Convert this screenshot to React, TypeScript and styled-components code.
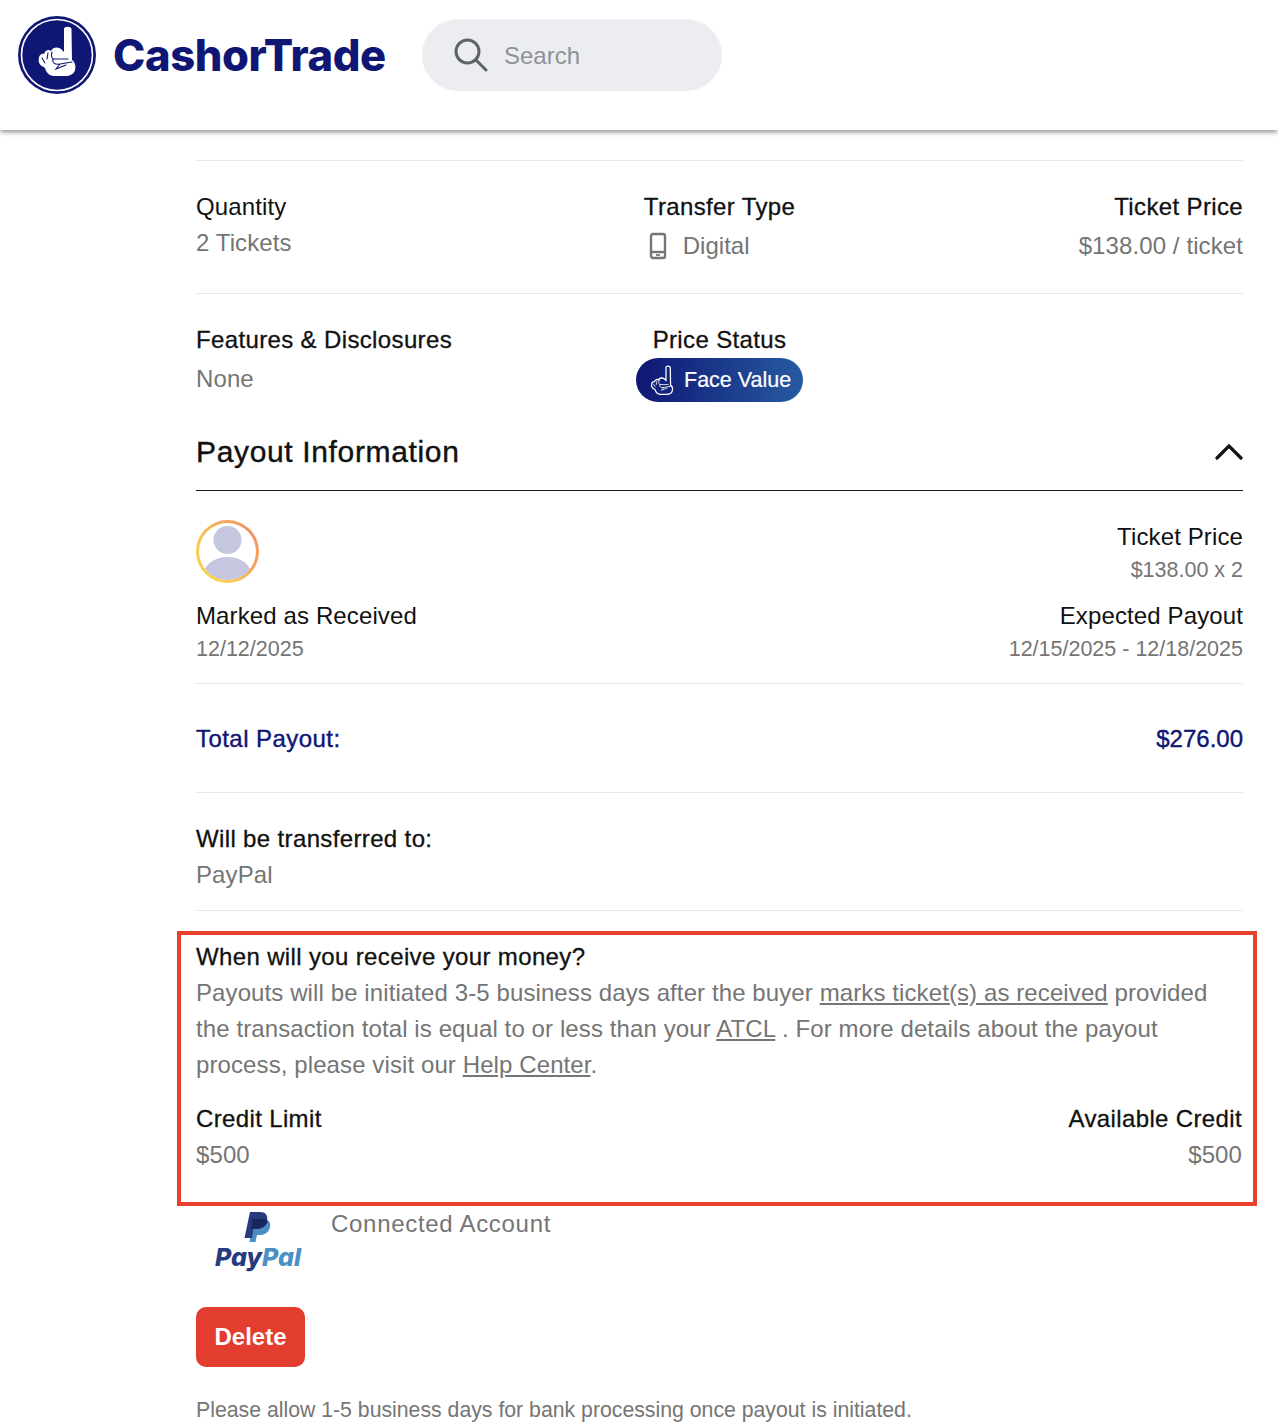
import React from 'react';
import styled, { createGlobalStyle } from 'styled-components';

const GlobalStyle = createGlobalStyle`
  html, body {
    margin: 0;
    padding: 0;
    background: #fff;
    font-family: "Liberation Sans", Arial, sans-serif;
    -webkit-font-smoothing: antialiased;
  }
  * { box-sizing: border-box; }
`;

const Navy = '#0f1674';
const Gray = '#757575';
const Ink = '#111111';
const Line = '#e8e8e8';

const Page = styled.div`
  width: 1278px;
  height: 1426px;
  overflow: hidden;
`;

const Header = styled.header`
  height: 130px;
  display: flex;
  align-items: flex-start;
  padding: 16px 0 0 18px;
  background: #fff;
  box-shadow: 0 2px 5px rgba(0, 0, 0, 0.45);
  position: relative;
`;

const Brand = styled.div`
  font-family: Inter, sans-serif;
  font-weight: 800;
  font-size: 43.5px;
  letter-spacing: -0.4px;
  line-height: 78px;
  color: ${Navy};
  margin-left: 17px;
  width: 273px;
  white-space: nowrap;
`;

const SearchBox = styled.div`
  width: 300px;
  height: 72px;
  margin: 3px 0 0 36px;
  border-radius: 36px;
  background: #ebedf0;
  display: flex;
  align-items: center;
  padding-left: 30px;
  gap: 16px;
  color: #8e9399;
  font-size: 24px;
`;

const SearchText = styled.span`
  padding-top: 2px;
`;

const Main = styled.main`
  margin-left: 196px;
  width: 1047px;
  padding-top: 30px;
`;

const Row = styled.section<{ $height: number }>`
  height: ${(p) => p.$height}px;
  display: grid;
  grid-template-columns: 1fr 1fr 1fr;
  border-top: 1px solid ${Line};
`;

const Col = styled.div<{ $align?: string; $top?: number }>`
  display: flex;
  flex-direction: column;
  align-items: ${(p) => p.$align || 'flex-start'};
  padding-top: ${(p) => p.$top ?? 31}px;
`;

const Group = styled.div`
  display: flex;
  flex-direction: column;
  align-items: flex-start;
`;

const Label = styled.div`
  font-size: 24px;
  line-height: 30px;
  color: ${Ink};
  white-space: nowrap;
  letter-spacing: 0.36px;
  -webkit-text-stroke: 0.3px ${Ink};
`;

const Plain = styled(Label)`
  letter-spacing: 0.12px;
  -webkit-text-stroke: 0;
`;

const Value = styled.div<{ $top?: number; $small?: boolean }>`
  font-size: ${(p) => (p.$small ? 21.5 : 24)}px;
  line-height: 30px;
  color: ${Gray};
  letter-spacing: ${(p) => (p.$small ? 0 : 0.1)}px;
  margin-top: ${(p) => p.$top ?? 6}px;
  white-space: nowrap;
`;

const DigitalRow = styled.div`
  display: flex;
  align-items: center;
  gap: 16px;
  margin: 9px 0 0 5px;
  font-size: 24px;
  line-height: 30px;
  color: ${Gray};
`;

const Badge = styled.div`
  width: 167px;
  height: 44px;
  margin-top: 3px;
  border-radius: 22px;
  background: linear-gradient(90deg, #0f1674, #265ba0);
  color: #fff;
  display: flex;
  align-items: center;
  gap: 10px;
  padding-left: 14px;
  font-size: 21.5px;
  -webkit-text-stroke: 0.2px #fff;
  white-space: nowrap;
`;

const SectionHead = styled.div`
  height: 89px;
  display: flex;
  align-items: center;
  justify-content: space-between;
  border-bottom: 1px solid #1a1a1a;
  font-size: 30px;
  letter-spacing: 0.65px;
  -webkit-text-stroke: 0.4px ${Ink};
  color: ${Ink};
  padding-top: 12px;
`;

const PayoutGrid = styled.div`
  height: 192px;
  display: flex;
  justify-content: space-between;
`;

const Received = styled.div`
  padding-top: 29px;
`;

const ReceivedLabel = styled(Plain)`
  margin-top: 18px;
`;

const ExpectedLabel = styled(Plain)`
  margin-top: 16px;
`;

const Avatar = styled.div`
  width: 63px;
  height: 63px;
  border-radius: 50%;
  background: conic-gradient(from 45deg, #f08f6a, #f6a35e, #f8d24a, #f8cf4b, #f5b558, #f08f6a);
  padding: 3px;
`;

const AvatarInner = styled.div`
  width: 100%;
  height: 100%;
  border-radius: 50%;
  background: #fff;
  overflow: hidden;
`;

const TotalRow = styled.div`
  height: 109px;
  border-top: 1px solid ${Line};
  display: flex;
  align-items: center;
  justify-content: space-between;
  font-size: 24px;
  -webkit-text-stroke: 0.4px ${Navy};
  color: ${Navy};
  padding-top: 2px;
`;

const TotalLabel = styled.span`
  letter-spacing: 0.45px;
`;

const TransferRow = styled.div`
  height: 118px;
  border-top: 1px solid ${Line};
  padding-top: 31px;
`;

const Rule = styled.div`
  height: 1px;
  background: ${Line};
`;

const Callout = styled.div`
  width: 1080px;
  height: 275px;
  margin: 20px 0 0 -19px;
  border: 4px solid #e8402a;
  padding: 7px 11px 0 15px;
`;

const CalloutText = styled.p`
  margin: 3px 0 0;
  font-size: 24px;
  line-height: 36px;
  letter-spacing: 0.1px;
  color: ${Gray};
  white-space: nowrap;
`;

const TextLink = styled.a`
  color: ${Gray};
  text-decoration: underline;
`;

const CreditRow = styled.div`
  display: flex;
  justify-content: space-between;
  margin-top: 21px;
`;

const CreditCol = styled.div<{ $right?: boolean }>`
  display: flex;
  flex-direction: column;
  align-items: ${(p) => (p.$right ? 'flex-end' : 'flex-start')};
`;

const AccountRow = styled.div`
  display: flex;
  height: 101px;
  padding-left: 17px;
  gap: 28px;
`;

const PayPalLogo = styled.div`
  width: 90px;
  padding-top: 5px;
  display: flex;
  flex-direction: column;
  align-items: center;
`;

const PayPalWord = styled.div`
  font-family: Inter, sans-serif;
  font-weight: 800;
  font-style: italic;
  font-size: 25px;
  line-height: 30px;
  color: #253b80;
  margin-top: -1px;
  white-space: nowrap;
`;

const PayPalPal = styled.span`
  color: #4a90c4;
`;

const ConnectedText = styled.div`
  font-size: 24px;
  line-height: 30px;
  letter-spacing: 0.7px;
  color: ${Gray};
  padding-top: 3px;
`;

const DeleteButton = styled.button`
  width: 109px;
  height: 60px;
  border: none;
  border-radius: 10px;
  background: #e23d2e;
  color: #fff;
  font-family: inherit;
  font-size: 24px;
  font-weight: 700;
  padding: 0;
  display: block;
`;

const Note = styled.div`
  margin-top: 28px;
  font-size: 21.25px;
  line-height: 30px;
  color: ${Gray};
  white-space: nowrap;
`;

const HAND_OUTLINE =
  'M46 13 C46 10 53 10 53.5 13 L54 44 C57 46 58 50 57 54 C56 58 52 60 47 60 L36 60 C31 60 28 56 27 52 L24 50 C21 49 20 44 21 42 C21 39 24 37 26 38 C27 34 31 33 33 35 C35 30 42 31 44 34 L46 36 Z';
const HAND_DETAIL =
  'M30 37 L29 43 M24 42 L27 47 M34 36 C33 39 33 41 35 43 L50 43 M35 43 C34 47 37 49 42 48 L54 46 M42 48 L38 53 L48 49';

function LogoMark() {
  return (
    <svg width="78" height="78" viewBox="0 0 78 78">
      <circle cx="39" cy="39" r="39" fill={Navy} />
      <circle cx="39" cy="39" r="35.5" fill="none" stroke="#fff" strokeWidth="1.6" />
      <path d={HAND_OUTLINE} fill="#fff" />
      <path d={HAND_DETAIL} fill="none" stroke={Navy} strokeWidth="1.1" strokeLinecap="round" />
    </svg>
  );
}

function SearchIcon() {
  return (
    <svg width="36" height="36" viewBox="0 0 36 36" fill="none" stroke="#5f6368" strokeWidth="3" strokeLinecap="round">
      <circle cx="15.5" cy="14.5" r="11.5" />
      <path d="M24 23 L34 33" />
    </svg>
  );
}

function PhoneIcon() {
  return (
    <svg width="18" height="28" viewBox="0 0 18 28" fill="none" stroke={Gray} strokeWidth="2.4">
      <rect x="2" y="2" width="14" height="24" rx="2" />
      <path d="M2 20 H16" />
      <path d="M7 23 H11" strokeWidth="1.8" />
    </svg>
  );
}

function BadgeHand() {
  return (
    <svg width="24" height="32" viewBox="18 8 42 54">
      <path d={HAND_OUTLINE} fill="none" stroke="#fff" strokeWidth="2.2" strokeLinejoin="round" />
      <path d={HAND_DETAIL} fill="none" stroke="#fff" strokeWidth="1.4" strokeLinecap="round" />
    </svg>
  );
}

function Chevron() {
  return (
    <svg width="28" height="18" viewBox="0 0 28 18" fill="none" stroke="#111" strokeWidth="3.2" strokeLinecap="round">
      <path d="M2 15 L14 3 L26 15" />
    </svg>
  );
}

function AvatarFigure() {
  return (
    <svg width="57" height="57" viewBox="0 0 57 57">
      <circle cx="28.5" cy="17" r="14" fill="#c5c7e0" />
      <ellipse cx="28.5" cy="52" rx="24" ry="18" fill="#c5c7e0" />
    </svg>
  );
}

function PayPalMark() {
  return (
    <svg width="28" height="32" viewBox="0 0 28 32">
      <path d="M9 8 H19 C25 8 27 12 26 16 C25 21 21 24 16 24 H13 L11.5 31 H5.5 Z" fill="#4a90c4" />
      <path d="M6 1 H16 C22 1 24 5 23 9 C22 15 18 18 12 18 H9.5 L8 27 H0.5 Z" fill="#253b80" />
      <path d="M8.5 8 H19 C22 8 24 9 23.5 11 C22 15 18 18 12 18 H9.5 L7 18 Z" fill="#1b2560" />
    </svg>
  );
}

export default function App() {
  return (
    <Page>
      <GlobalStyle />
      <Header>
        <LogoMark />
        <Brand>CashorTrade</Brand>
        <SearchBox>
          <SearchIcon />
          <SearchText>Search</SearchText>
        </SearchBox>
      </Header>
      <Main>
        <Row $height={133}>
          <Col>
            <Plain>Quantity</Plain>
            <Value>2 Tickets</Value>
          </Col>
          <Col $align="center">
            <Group>
              <Label>Transfer Type</Label>
              <DigitalRow>
                <PhoneIcon />
                <span>Digital</span>
              </DigitalRow>
            </Group>
          </Col>
          <Col $align="flex-end">
            <Label>Ticket Price</Label>
            <Value $top={9}>$138.00 / ticket</Value>
          </Col>
        </Row>
        <Row $height={109}>
          <Col>
            <Label>Features &amp; Disclosures</Label>
            <Value $top={9}>None</Value>
          </Col>
          <Col $align="center">
            <Label>Price Status</Label>
            <Badge>
              <BadgeHand />
              Face Value
            </Badge>
          </Col>
        </Row>
        <SectionHead>
          Payout Information
          <Chevron />
        </SectionHead>
        <PayoutGrid>
          <Received>
            <Avatar>
              <AvatarInner>
                <AvatarFigure />
              </AvatarInner>
            </Avatar>
            <ReceivedLabel>Marked as Received</ReceivedLabel>
            <Value $small $top={3}>12/12/2025</Value>
          </Received>
          <Col $align="flex-end" $top={31}>
            <Plain>Ticket Price</Plain>
            <Value $small $top={3}>$138.00 x 2</Value>
            <ExpectedLabel>Expected Payout</ExpectedLabel>
            <Value $small $top={3}>12/15/2025 - 12/18/2025</Value>
          </Col>
        </PayoutGrid>
        <TotalRow>
          <TotalLabel>Total Payout:</TotalLabel>
          <span>$276.00</span>
        </TotalRow>
        <TransferRow>
          <Label>Will be transferred to:</Label>
          <Value>PayPal</Value>
        </TransferRow>
        <Rule />
        <Callout>
          <Label>When will you receive your money?</Label>
          <CalloutText>
            Payouts will be initiated 3-5 business days after the buyer{' '}
            <TextLink>marks ticket(s) as received</TextLink> provided
            <br />
            the transaction total is equal to or less than your <TextLink>ATCL</TextLink> . For more details about the payout
            <br />
            process, please visit our <TextLink>Help Center</TextLink>.
          </CalloutText>
          <CreditRow>
            <CreditCol>
              <Label>Credit Limit</Label>
              <Value>$500</Value>
            </CreditCol>
            <CreditCol $right>
              <Label>Available Credit</Label>
              <Value>$500</Value>
            </CreditCol>
          </CreditRow>
        </Callout>
        <AccountRow>
          <PayPalLogo>
            <PayPalMark />
            <PayPalWord>
              Pay<PayPalPal>Pal</PayPalPal>
            </PayPalWord>
          </PayPalLogo>
          <ConnectedText>Connected Account</ConnectedText>
        </AccountRow>
        <DeleteButton>Delete</DeleteButton>
        <Note>Please allow 1-5 business days for bank processing once payout is initiated.</Note>
      </Main>
    </Page>
  );
}
